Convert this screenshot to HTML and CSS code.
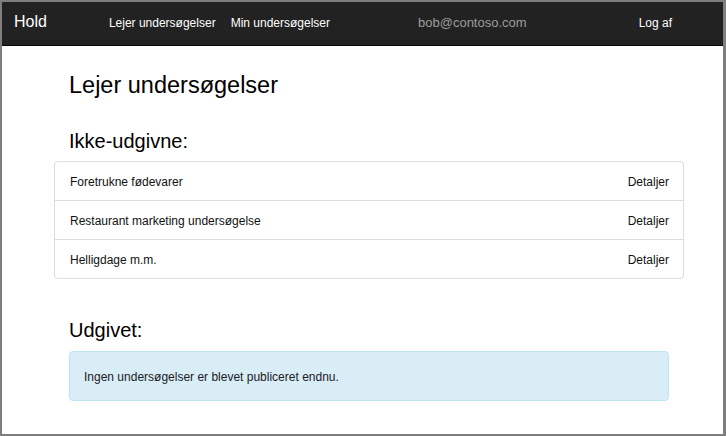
FILE: index.html
```html
<!DOCTYPE html>
<html lang="da">
<head>
<meta charset="utf-8">
<title>Lejer undersøgelser</title>
<link rel="stylesheet" href="styles.css">
</head>
<body>
<div class="frame">
  <nav class="navbar">
    <a class="brand" href="#">Hold</a>
    <ul class="nav-links">
      <li><a href="#">Lejer undersøgelser</a></li>
      <li><a href="#">Min undersøgelser</a></li>
    </ul>
    <span class="user">bob@contoso.com</span>
    <a class="logout" href="#">Log af</a>
  </nav>
  <main class="container">
    <h2 class="page-title">Lejer undersøgelser</h2>
    <h3 class="section-title">Ikke-udgivne:</h3>
    <div class="list-group">
      <div class="list-item"><span>Foretrukne fødevarer</span><a href="#">Detaljer</a></div>
      <div class="list-item"><span>Restaurant marketing undersøgelse</span><a href="#">Detaljer</a></div>
      <div class="list-item"><span>Helligdage m.m.</span><a href="#">Detaljer</a></div>
    </div>
    <h3 class="section-title published">Udgivet:</h3>
    <div class="alert">Ingen undersøgelser er blevet publiceret endnu.</div>
  </main>
</div>
</body>
</html>
```

FILE: styles.css
```css
* { box-sizing: border-box; }
html, body { margin: 0; padding: 0; }
body {
  font-family: "Liberation Sans", Arial, sans-serif;
  color: #111;
  background: #fff;
}
a { text-decoration: none; color: inherit; }

.frame {
  width: 726px;
  height: 436px;
  border-style: solid;
  border-color: #7f7f7f;
  border-width: 2px 3px 2px 2px;
  overflow: hidden;
  background: #fff;
}

.navbar {
  display: flex;
  align-items: baseline;
  height: 44px;
  padding-top: 11px;
  background: #222;
  border-bottom: 1px solid #080808;
}
.brand {
  padding-left: 12px;
  font-size: 16px;
  line-height: 18px;
  color: #fff;
}
.nav-links {
  display: flex;
  gap: 15px;
  margin: 0 0 0 62px;
  padding: 0;
  list-style: none;
}
.nav-links a, .logout {
  font-size: 12px;
  line-height: 14px;
  color: #fff;
}
.user {
  margin-left: 88px;
  font-size: 13px;
  line-height: 15px;
  color: #9d9d9d;
}
.logout {
  margin-left: auto;
  margin-right: 51px;
}

.container {
  width: 630px;
  margin-left: 52px;
}
.page-title {
  margin: 26px 0 0;
  padding-left: 15px;
  font-size: 23.5px;
  line-height: 26px;
  font-weight: normal;
  color: #000;
}
.section-title {
  margin: 32px 0 9px;
  padding-left: 15px;
  font-size: 20px;
  line-height: 22px;
  font-weight: normal;
  color: #000;
}
.section-title.published {
  margin: 40px 0 10px;
}

.list-group {
  border: 1px solid #ddd;
  border-radius: 4px;
}
.list-item {
  display: flex;
  justify-content: space-between;
  padding: 13px 14px 11px 15px;
  font-size: 12px;
  line-height: 14px;
}
.list-item + .list-item {
  border-top: 1px solid #ddd;
}

.alert {
  margin: 0 15px;
  padding: 16px 14px 14px;
  border: 1px solid #bce8f1;
  border-radius: 4px;
  background: #d9edf7;
  font-size: 12px;
  line-height: 18px;
  color: #1b1b24;
}
```
